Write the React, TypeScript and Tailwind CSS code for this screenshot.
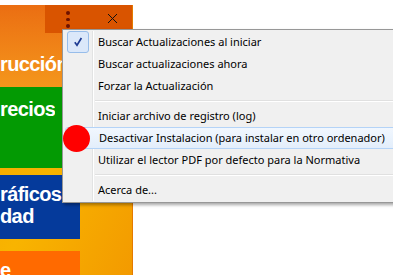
import React from 'react'

const items: (string | null)[] = [
  'Buscar Actualizaciones al iniciar',
  'Buscar actualizaciones ahora',
  'Forzar la Actualización',
  null,
  'Iniciar archivo de registro (log)',
  'Desactivar Instalacion (para instalar en otro ordenador)',
  'Utilizar el lector PDF por defecto para la Normativa',
  null,
  'Acerca de...',
]

function TitleBar() {
  return (
    <div className="absolute left-[45px] top-0 h-[28px] w-[88px] bg-[#d95400]">
      <div className="absolute left-[21px] top-[6px] flex flex-col gap-[3px]">
        <span className="block h-[3.5px] w-[3.5px] rounded-full bg-[#6e1200]" />
        <span className="block h-[3.5px] w-[3.5px] rounded-full bg-[#6e1200]" />
        <span className="block h-[3.5px] w-[3.5px] rounded-full bg-[#6e1200]" />
      </div>
      <svg className="absolute left-[62px] top-[8px]" width="11" height="11" viewBox="0 0 11 11">
        <path d="M1 1 L10 10 M10 1 L1 10" stroke="#111" strokeWidth="1" />
      </svg>
    </div>
  )
}

function AppPanel() {
  const tile = "overflow-hidden whitespace-nowrap text-white font-bold text-[20px] tracking-[-0.6px] leading-[22px] font-['Liberation_Sans',Arial,sans-serif]"
  return (
    <div className="relative h-[270px] w-[133px] overflow-hidden border-r border-[#e47a00] bg-gradient-to-br from-[#f5a300] via-[#f8b400] to-[#f39a00]">
      <div className="flex h-[82px] w-full items-end bg-gradient-to-b from-[#eb6e12] to-[#f4961c] pb-[12px]">
        <span className={tile}>rucción</span>
      </div>
      <div className="flex h-[81px] w-[80px] items-start bg-[#039a03] pt-[11px]">
        <span className={tile}>recios</span>
      </div>
      <div className="mt-[7px] flex h-[64px] w-[80px] flex-col bg-[#053a9b] pt-[8px]">
        <span className={tile}>ráficos</span>
        <span className={tile}>dad</span>
      </div>
      <div className="mt-[12px] h-[40px] w-[80px] bg-[#ff6a00] pt-[8px]">
        <span className={tile}>e</span>
      </div>
      <TitleBar />
    </div>
  )
}

function Menu() {
  return (
    <div className="absolute left-[62px] top-[29px] w-[340px] border border-[#979797] bg-[#f0f0f0] py-[1px] pl-[1px] shadow-[2px_2px_3px_rgba(0,0,0,0.35)] font-['Noto_Sans','Open_Sans',sans-serif] text-[11px] text-black">
      <div className="absolute bottom-[1px] left-[29px] top-[1px] w-[2px] border-l border-[#e2e3e3] bg-white" />
      {items.map((label, i) =>
        label === null ? (
          <div key={i} className="relative flex h-[8px] items-center pl-[31px]">
            <div className="h-[2px] w-full border-t border-[#e0e0e0] bg-white" />
          </div>
        ) : (
          <div
            key={i}
            className={
              'relative flex h-[22px] items-center ' +
              (i === 5 ? 'mx-[1px] rounded-[3px] border border-[#b4d3f7] bg-gradient-to-b from-[#f1f7fe] to-[#e3eefb]' : '')
            }
          >
            <div className="ml-[2px] flex h-[22px] w-[24px] shrink-0 items-center justify-center">
              {i === 0 && (
                <div className="flex h-[22px] w-[22px] items-center justify-center rounded-[3px] border border-[#97bdea] bg-[#dbe8fa]">
                  <svg width="10" height="10" viewBox="0 0 10 10">
                    <path d="M1.8 5.2 L4 8.2 L8.4 1" fill="none" stroke="#1d3b93" strokeWidth="1.7" />
                  </svg>
                </div>
              )}
            </div>
            <span className={'whitespace-nowrap ' + (i === 5 ? 'pl-[7px]' : 'pl-[8px]')}>{label}</span>
          </div>
        )
      )}
    </div>
  )
}

export default function App() {
  return (
    <div className="relative h-[275px] w-[393px] overflow-hidden bg-white pt-[5px]">
      <AppPanel />
      <Menu />
      <div className="absolute left-[63px] top-[125px] h-[27px] w-[27px] rounded-full bg-[#ff0000]" />
    </div>
  )
}
